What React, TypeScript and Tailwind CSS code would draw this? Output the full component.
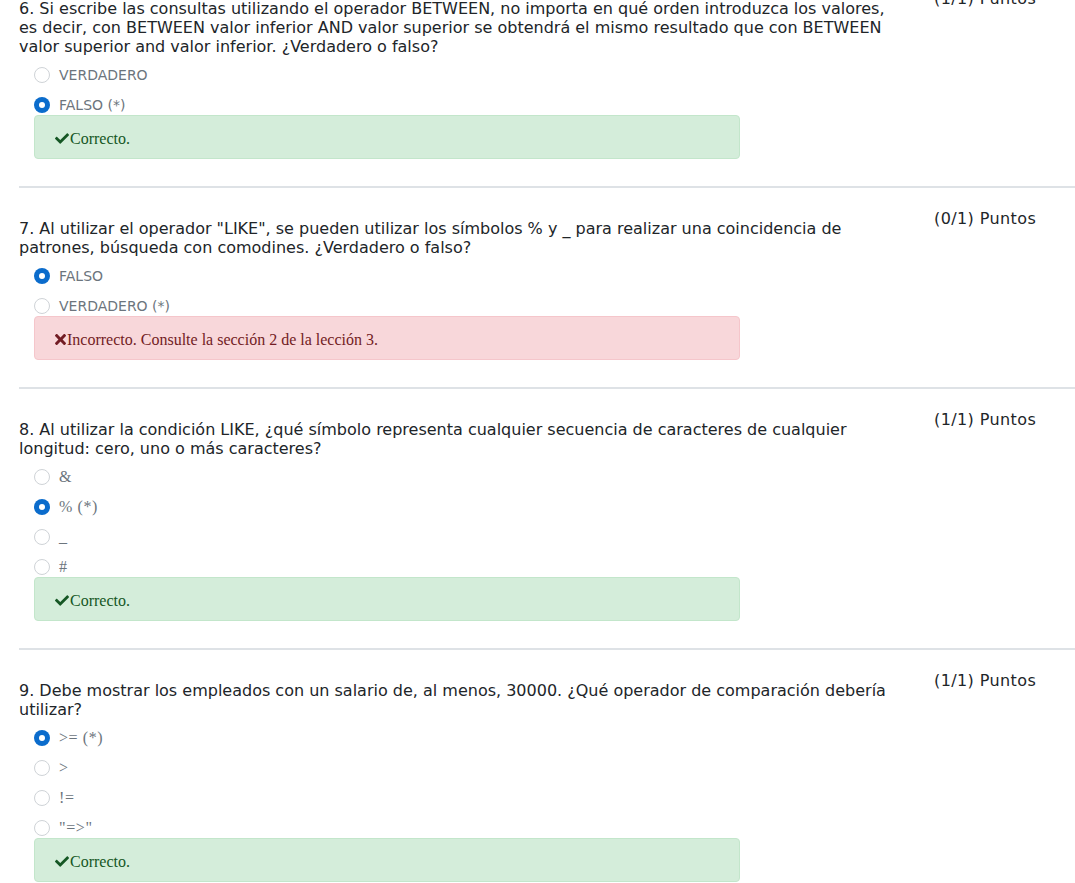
import React from "react";

type Opt = { label: string; checked?: boolean };
type Q = {
  text: string;
  points: string;
  options: Opt[];
  serif?: boolean;
  correct: boolean;
  feedback: string;
};

const questions: Q[] = [
  {
    text: "6. Si escribe las consultas utilizando el operador BETWEEN, no importa en qué orden introduzca los valores, es decir, con BETWEEN valor inferior AND valor superior se obtendrá el mismo resultado que con BETWEEN valor superior and valor inferior. ¿Verdadero o falso?",
    points: "(1/1) Puntos",
    options: [{ label: "VERDADERO" }, { label: "FALSO (*)", checked: true }],
    correct: true,
    feedback: "Correcto.",
  },
  {
    text: "7. Al utilizar el operador \"LIKE\", se pueden utilizar los símbolos % y _ para realizar una coincidencia de patrones, búsqueda con comodines. ¿Verdadero o falso?",
    points: "(0/1) Puntos",
    options: [{ label: "FALSO", checked: true }, { label: "VERDADERO (*)" }],
    correct: false,
    feedback: "Incorrecto. Consulte la sección 2 de la lección 3.",
  },
  {
    text: "8. Al utilizar la condición LIKE, ¿qué símbolo representa cualquier secuencia de caracteres de cualquier longitud: cero, uno o más caracteres?",
    points: "(1/1) Puntos",
    options: [
      { label: "&" },
      { label: "% (*)", checked: true },
      { label: "_" },
      { label: "#" },
    ],
    serif: true,
    correct: true,
    feedback: "Correcto.",
  },
  {
    text: "9. Debe mostrar los empleados con un salario de, al menos, 30000. ¿Qué operador de comparación debería utilizar?",
    points: "(1/1) Puntos",
    options: [
      { label: ">= (*)", checked: true },
      { label: ">" },
      { label: "!=" },
      { label: "\"=>\"" },
    ],
    serif: true,
    correct: true,
    feedback: "Correcto.",
  },
];

function Radio({ checked }: { checked?: boolean }) {
  if (checked) {
    return (
      <span className="w-4 h-4 shrink-0 rounded-full bg-[#0b6ccc] flex items-center justify-center">
        <span className="w-[6px] h-[6px] rounded-full bg-white" />
      </span>
    );
  }
  return <span className="w-4 h-4 shrink-0 rounded-full border border-[#cfd3d7] bg-white" />;
}

function CheckIcon() {
  return (
    <svg width="14" height="11" viewBox="0 66 512 380" className="inline-block mr-[1px]" fill="#155724">
      <path d="M173.898 439.404l-166.4-166.4c-9.997-9.997-9.997-26.206 0-36.204l36.203-36.204c9.997-9.998 26.207-9.998 36.204 0L192 312.69 432.095 72.596c9.997-9.997 26.207-9.997 36.204 0l36.203 36.204c9.997 9.997 9.997 26.206 0 36.204l-294.4 294.401c-9.998 9.997-26.207 9.997-36.204-.001z" />
    </svg>
  );
}

function TimesIcon() {
  return (
    <svg width="11" height="11" viewBox="0 80 352 352" className="inline-block mr-[1px]" fill="#721c24">
      <path d="M242.72 256l100.07-100.07c12.28-12.28 12.28-32.19 0-44.48l-22.24-22.24c-12.28-12.28-32.19-12.28-44.48 0L176 189.28 75.93 89.21c-12.28-12.28-32.19-12.28-44.48 0L9.21 111.45c-12.28 12.28-12.28 32.19 0 44.48L109.28 256 9.21 356.07c-12.28 12.28-12.28 32.19 0 44.48l22.24 22.24c12.28 12.28 32.2 12.28 44.48 0L176 322.72l100.07 100.07c12.28 12.28 32.2 12.28 44.48 0l22.24-22.24c12.28-12.28 12.28-32.19 0-44.48L242.72 256z" />
    </svg>
  );
}

function Question({ q }: { q: Q }) {
  return (
    <div className="border-t-2 border-[#dee2e6] pt-[21px] pb-[27px]">
      <div className="flex items-start text-[#212529] text-[16px] leading-[19px]">
        <div className="w-[887px] mt-[10px]">{q.text}</div>
        <div className="ml-[28px] whitespace-nowrap tracking-[0.4px]">{q.points}</div>
      </div>
      <div className="pl-[15px] mt-[8px] flex flex-col gap-[8px]">
        {q.options.map((o, i) => (
          <div key={i} className="h-[22px] flex items-center gap-[9px]">
            <Radio checked={o.checked} />
            <span
              className={
                q.serif
                  ? "text-[#6c757d] text-[16px] tracking-[0.6px] font-['Liberation_Serif',serif]"
                  : "text-[#6c757d] text-[14px]"
              }
            >
              {o.label}
            </span>
          </div>
        ))}
      </div>
      <div className="pl-[15px] mt-[-1px]">
        <div
          className={
            q.correct
              ? "w-[706px] h-[44px] rounded-[4px] border border-[#c3e6cb] bg-[#d4edda] text-[#155724] flex items-center pl-[20px] pt-[3px] font-['Liberation_Serif',serif] text-[16px]"
              : "w-[706px] h-[44px] rounded-[4px] border border-[#f5c6cb] bg-[#f8d7da] text-[#721c24] flex items-center pl-[20px] pt-[3px] font-['Liberation_Serif',serif] text-[16px]"
          }
        >
          {q.correct ? <CheckIcon /> : <TimesIcon />}
          <span>{q.feedback}</span>
        </div>
      </div>
    </div>
  );
}

export default function App() {
  return (
    <div className="w-[1075px] h-[883px] overflow-hidden bg-white font-['DejaVu_Sans',Verdana,sans-serif]">
      <div className="ml-[19px] mt-[-34px]">
        {questions.map((q, i) => (
          <Question key={i} q={q} />
        ))}
      </div>
    </div>
  );
}
